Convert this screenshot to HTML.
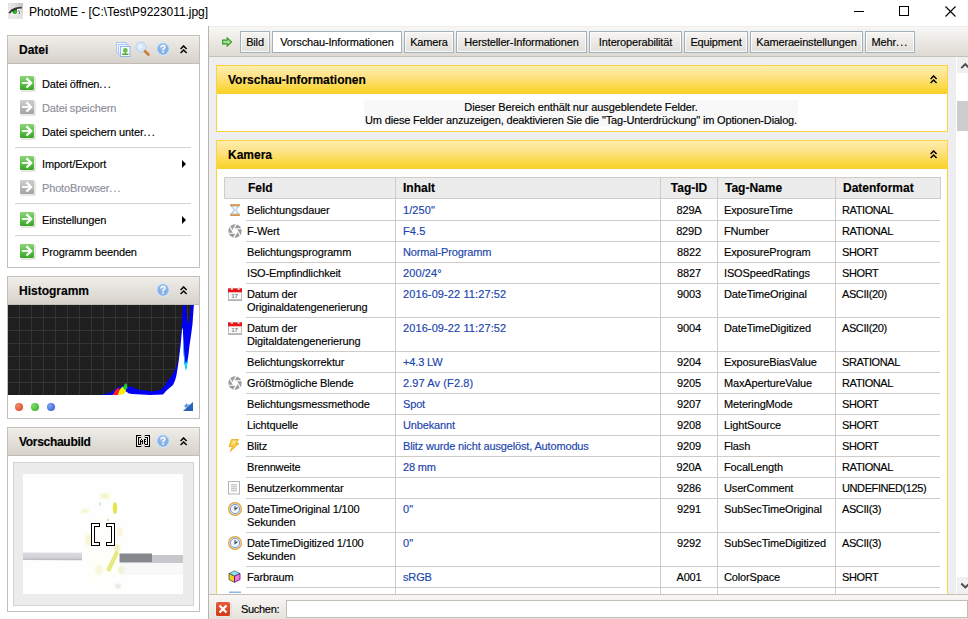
<!DOCTYPE html><html><head><meta charset="utf-8"><style>
*{margin:0;padding:0;box-sizing:border-box}
html,body{width:968px;height:619px;overflow:hidden;background:#fff;font-family:"Liberation Sans",sans-serif;font-size:11px;color:#000}
.a{position:absolute}
.t{position:absolute;white-space:nowrap;line-height:13px;height:13px;margin-top:-10px;letter-spacing:-0.15px;-webkit-text-stroke:0.15px currentColor}
.b{font-weight:bold;font-size:12px;letter-spacing:0}
.blue{color:#1a44ad}
.gray{color:#8d8d99}
.ph{position:absolute;background:linear-gradient(#f6f4f0 0,#efede9 1px,#d6d2cb);border-bottom:1px solid #c2bdb5}
.panel{position:absolute;border:1px solid #c4bfb7;background:#fff}
.sep{position:absolute;height:1px;background:#d8d4cc}
.btn{position:absolute;top:31px;height:22px;border:1px solid #9fb0bf;background:linear-gradient(#f6f5f2,#e2dfd9);box-shadow:inset 0 0 0 1px rgba(255,255,255,0.75)}
.hl{position:absolute;height:1px;background:#d0ccc5}
.vl{position:absolute;width:1px;background:#d0ccc5}
</style></head><body>
<svg width="0" height="0" style="position:absolute"><defs>
<linearGradient id="gg" x1="0" y1="0" x2="0" y2="1"><stop offset="0" stop-color="#8ad67a"/><stop offset="1" stop-color="#35a623"/></linearGradient>
<linearGradient id="gr" x1="0" y1="0" x2="0" y2="1"><stop offset="0" stop-color="#cfcfcf"/><stop offset="1" stop-color="#a3a3a3"/></linearGradient>
</defs></svg>

<svg class="a" style="left:8px;top:3px" width="15" height="16" viewBox="0 0 15 16"><defs><linearGradient id="eyebg" x1="0" y1="1" x2="1" y2="0"><stop offset="0" stop-color="#ececec"/><stop offset="0.6" stop-color="#e2e2e2"/><stop offset="1" stop-color="#bdbdbd"/></linearGradient></defs><rect width="15" height="16" fill="url(#eyebg)"/><path d="M1.2 10.5 Q5 5.5 13.5 5.2 Q12 10.5 6 12.2 Q3 12.6 1.2 10.5Z" fill="#f4f4f4"/><path d="M1.2 10.2 Q3.5 6.5 7 5.6 Q10 4.6 13.8 4.6" fill="none" stroke="#3e3e3e" stroke-width="1.9"/><path d="M10.5 7 Q12 8.5 11.2 11" fill="none" stroke="#6a6a6a" stroke-width="1"/><circle cx="6.8" cy="8.6" r="2.4" fill="#1c7a1c"/><circle cx="7.2" cy="9" r="1.4" fill="#22cc22"/><path d="M3 8 Q5 6.3 9 6.2" stroke="#333" stroke-width="1.2" fill="none"/></svg>
<div class="t" style="left:29px;top:17px;font-size:12px;letter-spacing:-0.05px;line-height:15px;height:15px;margin-top:-12px;-webkit-text-stroke:0.05px currentColor">PhotoME - [C:\Test\P9223011.jpg]</div>
<div class="a" style="left:854px;top:11px;width:10px;height:1px;background:#000"></div>
<div class="a" style="left:899px;top:6px;width:10px;height:10px;border:1px solid #000"></div>
<svg class="a" style="left:945px;top:6px" width="11" height="11" viewBox="0 0 11 11"><path d="M0.5 0.5 L10.5 10.5 M10.5 0.5 L0.5 10.5" stroke="#000" stroke-width="1.1"/></svg>
<div class="panel" style="left:7px;top:35px;width:193px;height:233px"></div>
<div class="ph" style="left:8px;top:36px;width:191px;height:28px"></div>
<div class="t b" style="left:19px;top:54px;">Datei</div>
<svg class="a" style="left:116px;top:42px" width="15" height="15" viewBox="0 0 15 15"><rect x="0.5" y="0.5" width="9.5" height="10" fill="#f2f7fd" stroke="#a9c8ee"/><rect x="2.5" y="2.5" width="9.5" height="10" fill="#f2f7fd" stroke="#a9c8ee"/><rect x="4.5" y="4.5" width="9.5" height="10" fill="#fafcff" stroke="#8db5e6"/><rect x="6" y="11.5" width="6.5" height="1.5" fill="#3fae30"/><circle cx="9.3" cy="8.4" r="2.4" fill="#63c04a"/><rect x="8.8" y="10" width="1" height="2" fill="#b07a3a"/></svg>
<svg class="a" style="left:135px;top:41px" width="16" height="16" viewBox="0 0 16 16"><circle cx="6" cy="6.2" r="5" fill="#d6e6f9" stroke="#b3d0f2" stroke-width="1"/><circle cx="5.3" cy="5.2" r="2.2" fill="#e8f2fc"/><path d="M10 10.2 L13.4 13.6" stroke="#c8823e" stroke-width="2.8" stroke-linecap="round"/></svg>
<svg style="position:absolute;left:156px;top:42px" width="14" height="14" viewBox="0 0 14 14"><circle cx="7" cy="7" r="6.9" fill="#d6e5f7"/><circle cx="7" cy="7" r="6" fill="#a9c8ef"/><circle cx="7" cy="7" r="5.2" fill="#86b0e6"/><circle cx="7" cy="5.5" r="3.5" fill="#9cc0ec" opacity="0.6"/><path d="M5.1 5.4 Q5.1 3.5 7 3.5 Q8.9 3.5 8.9 5.1 Q8.9 6.1 7.8 6.6 Q7 7 7 8.2" fill="none" stroke="#fff" stroke-width="1.5"/><rect x="6.2" y="9.1" width="1.6" height="1.6" fill="#fff"/></svg>
<svg style="position:absolute;left:180px;top:45px" width="8" height="9" viewBox="0 0 8 9"><path d="M0.6 3.9 L3.6 0.9 L6.6 3.9 M0.6 8 L3.6 5 L6.6 8" fill="none" stroke="#000" stroke-width="1.45"/></svg>
<svg style="position:absolute;left:19px;top:75px" width="17" height="17" viewBox="0 0 17 17"><rect x="1.5" y="1.5" width="15" height="15" rx="1.5" fill="#d5d2c6"/><rect x="0.5" y="0.5" width="15" height="15" rx="1.5" fill="#fdfdfb"/><rect x="1" y="1" width="14" height="14" rx="1.2" fill="url(#gg)"/><path d="M2.9 8 H11.8" stroke="#fff" stroke-width="1.8"/><path d="M7.4 3.4 L12.2 8 L7.4 12.6" fill="none" stroke="#fff" stroke-width="2.2"/></svg>
<div class="t " style="left:42px;top:88px;">Datei öffnen<span style="letter-spacing:1.1px">...</span></div>
<svg style="position:absolute;left:19px;top:99px" width="17" height="17" viewBox="0 0 17 17"><rect x="1.5" y="1.5" width="15" height="15" rx="1.5" fill="#d5d2c6"/><rect x="0.5" y="0.5" width="15" height="15" rx="1.5" fill="#fdfdfb"/><rect x="1" y="1" width="14" height="14" rx="1.2" fill="url(#gr)"/><path d="M2.9 8 H11.8" stroke="#fff" stroke-width="1.8"/><path d="M7.4 3.4 L12.2 8 L7.4 12.6" fill="none" stroke="#fff" stroke-width="2.2"/></svg>
<div class="t gray" style="left:42px;top:112px;">Datei speichern</div>
<svg style="position:absolute;left:19px;top:123px" width="17" height="17" viewBox="0 0 17 17"><rect x="1.5" y="1.5" width="15" height="15" rx="1.5" fill="#d5d2c6"/><rect x="0.5" y="0.5" width="15" height="15" rx="1.5" fill="#fdfdfb"/><rect x="1" y="1" width="14" height="14" rx="1.2" fill="url(#gg)"/><path d="M2.9 8 H11.8" stroke="#fff" stroke-width="1.8"/><path d="M7.4 3.4 L12.2 8 L7.4 12.6" fill="none" stroke="#fff" stroke-width="2.2"/></svg>
<div class="t " style="left:42px;top:136px;">Datei speichern unter<span style="letter-spacing:1.1px">...</span></div>
<svg style="position:absolute;left:19px;top:155px" width="17" height="17" viewBox="0 0 17 17"><rect x="1.5" y="1.5" width="15" height="15" rx="1.5" fill="#d5d2c6"/><rect x="0.5" y="0.5" width="15" height="15" rx="1.5" fill="#fdfdfb"/><rect x="1" y="1" width="14" height="14" rx="1.2" fill="url(#gg)"/><path d="M2.9 8 H11.8" stroke="#fff" stroke-width="1.8"/><path d="M7.4 3.4 L12.2 8 L7.4 12.6" fill="none" stroke="#fff" stroke-width="2.2"/></svg>
<div class="t " style="left:42px;top:168px;">Import/Export</div>
<svg class="a" style="left:182px;top:160px" width="5" height="8" viewBox="0 0 5 8"><path d="M0 0 L4 4 L0 8Z" fill="#000"/></svg>
<svg style="position:absolute;left:19px;top:179px" width="17" height="17" viewBox="0 0 17 17"><rect x="1.5" y="1.5" width="15" height="15" rx="1.5" fill="#d5d2c6"/><rect x="0.5" y="0.5" width="15" height="15" rx="1.5" fill="#fdfdfb"/><rect x="1" y="1" width="14" height="14" rx="1.2" fill="url(#gr)"/><path d="M2.9 8 H11.8" stroke="#fff" stroke-width="1.8"/><path d="M7.4 3.4 L12.2 8 L7.4 12.6" fill="none" stroke="#fff" stroke-width="2.2"/></svg>
<div class="t gray" style="left:42px;top:192px;">PhotoBrowser<span style="letter-spacing:1.1px">...</span></div>
<svg style="position:absolute;left:19px;top:211px" width="17" height="17" viewBox="0 0 17 17"><rect x="1.5" y="1.5" width="15" height="15" rx="1.5" fill="#d5d2c6"/><rect x="0.5" y="0.5" width="15" height="15" rx="1.5" fill="#fdfdfb"/><rect x="1" y="1" width="14" height="14" rx="1.2" fill="url(#gg)"/><path d="M2.9 8 H11.8" stroke="#fff" stroke-width="1.8"/><path d="M7.4 3.4 L12.2 8 L7.4 12.6" fill="none" stroke="#fff" stroke-width="2.2"/></svg>
<div class="t " style="left:42px;top:224px;">Einstellungen</div>
<svg class="a" style="left:182px;top:216px" width="5" height="8" viewBox="0 0 5 8"><path d="M0 0 L4 4 L0 8Z" fill="#000"/></svg>
<svg style="position:absolute;left:19px;top:243px" width="17" height="17" viewBox="0 0 17 17"><rect x="1.5" y="1.5" width="15" height="15" rx="1.5" fill="#d5d2c6"/><rect x="0.5" y="0.5" width="15" height="15" rx="1.5" fill="#fdfdfb"/><rect x="1" y="1" width="14" height="14" rx="1.2" fill="url(#gg)"/><path d="M2.9 8 H11.8" stroke="#fff" stroke-width="1.8"/><path d="M7.4 3.4 L12.2 8 L7.4 12.6" fill="none" stroke="#fff" stroke-width="2.2"/></svg>
<div class="t " style="left:42px;top:256px;">Programm beenden</div>
<div class="sep" style="left:15px;top:147px;width:176px"></div>
<div class="sep" style="left:15px;top:203px;width:176px"></div>
<div class="sep" style="left:15px;top:235px;width:176px"></div>
<div class="panel" style="left:7px;top:276px;width:193px;height:143px"></div>
<div class="ph" style="left:8px;top:277px;width:191px;height:28px"></div>
<div class="t b" style="left:19px;top:295px;">Histogramm</div>
<svg style="position:absolute;left:156px;top:283px" width="14" height="14" viewBox="0 0 14 14"><circle cx="7" cy="7" r="6.9" fill="#d6e5f7"/><circle cx="7" cy="7" r="6" fill="#a9c8ef"/><circle cx="7" cy="7" r="5.2" fill="#86b0e6"/><circle cx="7" cy="5.5" r="3.5" fill="#9cc0ec" opacity="0.6"/><path d="M5.1 5.4 Q5.1 3.5 7 3.5 Q8.9 3.5 8.9 5.1 Q8.9 6.1 7.8 6.6 Q7 7 7 8.2" fill="none" stroke="#fff" stroke-width="1.5"/><rect x="6.2" y="9.1" width="1.6" height="1.6" fill="#fff"/></svg>
<svg style="position:absolute;left:180px;top:286px" width="8" height="9" viewBox="0 0 8 9"><path d="M0.6 3.9 L3.6 0.9 L6.6 3.9 M0.6 8 L3.6 5 L6.6 8" fill="none" stroke="#000" stroke-width="1.45"/></svg>
<svg class="a" style="left:8px;top:305px" width="191" height="90" viewBox="0 0 191 90"><rect width="191" height="90" fill="#1f1f1f"/><line x1="11.5" y1="0" x2="11.5" y2="90" stroke="#343434" stroke-width="1"/><line x1="23.5" y1="0" x2="23.5" y2="90" stroke="#343434" stroke-width="1"/><line x1="35.5" y1="0" x2="35.5" y2="90" stroke="#343434" stroke-width="1"/><line x1="47.5" y1="0" x2="47.5" y2="90" stroke="#343434" stroke-width="1"/><line x1="59.5" y1="0" x2="59.5" y2="90" stroke="#343434" stroke-width="1"/><line x1="71.5" y1="0" x2="71.5" y2="90" stroke="#343434" stroke-width="1"/><line x1="83.5" y1="0" x2="83.5" y2="90" stroke="#343434" stroke-width="1"/><line x1="95.5" y1="0" x2="95.5" y2="90" stroke="#343434" stroke-width="1"/><line x1="107.5" y1="0" x2="107.5" y2="90" stroke="#343434" stroke-width="1"/><line x1="119.5" y1="0" x2="119.5" y2="90" stroke="#343434" stroke-width="1"/><line x1="131.5" y1="0" x2="131.5" y2="90" stroke="#343434" stroke-width="1"/><line x1="143.5" y1="0" x2="143.5" y2="90" stroke="#343434" stroke-width="1"/><line x1="155.5" y1="0" x2="155.5" y2="90" stroke="#343434" stroke-width="1"/><line x1="167.5" y1="0" x2="167.5" y2="90" stroke="#343434" stroke-width="1"/><line x1="179.5" y1="0" x2="179.5" y2="90" stroke="#343434" stroke-width="1"/><line x1="0" y1="12.5" x2="187" y2="12.5" stroke="#343434" stroke-width="1"/><line x1="0" y1="25.5" x2="187" y2="25.5" stroke="#343434" stroke-width="1"/><line x1="0" y1="38.5" x2="187" y2="38.5" stroke="#343434" stroke-width="1"/><line x1="0" y1="51.5" x2="187" y2="51.5" stroke="#343434" stroke-width="1"/><line x1="0" y1="64.5" x2="187" y2="64.5" stroke="#343434" stroke-width="1"/><line x1="0" y1="77.5" x2="187" y2="77.5" stroke="#343434" stroke-width="1"/><path d="M92.0 90.0 L102.0 88.0 L106.0 85.0 L111.0 82.0 L115.0 81.0 L118.0 78.5 L120.0 82.0 L124.0 81.5 L128.0 84.0 L132.0 85.0 L138.0 85.5 L144.0 86.5 L150.0 85.5 L154.0 84.0 L157.0 80.0 L160.5 75.0 L163.5 71.0 L166.0 67.0 L168.3 62.0 L170.0 55.0 L170.7 50.0 L171.5 41.0 L172.3 32.0 L173.3 26.0 L174.0 20.0 L174.8 2.0 L175.5 0.0 L178.0 0.0 L178.5 9.0 L179.5 17.0 L180.5 19.0 L181.5 13.0 L182.3 7.0 L182.8 0.0 L186.5 0.0 L186.5 90.0 Z" fill="#0000f4"/><path d="M104.0 90.0 L108.0 89.0 L111.0 87.5 L115.0 87.0 L118.0 86.5 L121.0 88.5 L124.0 89.0 L142.0 90.0 L155.0 89.5 L158.0 86.0 L162.0 82.5 L165.0 80.0 L167.0 75.5 L168.3 71.0 L169.5 64.0 L170.7 56.0 L172.3 43.0 L173.2 34.0 L174.0 25.0 L174.8 22.5 L175.3 35.0 L175.6 47.0 L176.4 58.0 L177.2 62.0 L178.0 64.5 L178.8 61.0 L179.6 56.0 L180.4 50.0 L181.2 43.0 L182.0 37.0 L182.8 32.0 L183.6 26.0 L184.5 19.0 L185.2 9.0 L185.8 1.0 L186.0 0.0 L191.0 0.0 L191.0 90.0 Z" fill="#fff"/><path d="M175.2 33.0 L175.6 47.0 L176.4 58.0 L177.2 62.0 L178.0 66.0 L178.8 62.0 L179.6 56.0 L180.2 52.0 L178.8 57.0 L177.5 58.0 L176.5 51.0 L175.8 39.0 Z" fill="#00e8f8"/><path d="M172.5 335 L173 328 L173.6 336 L172.8 350Z" fill="#22dd22"/><path d="M185 305.5 L187 305.5 L186 309Z" fill="#ff22ff"/><path d="M105.0 90.0 L107.0 85.5 L109.0 84.0 L111.0 82.5 L112.0 86.0 L110.0 90.0 Z" fill="#ff1a1a"/><path d="M110.0 90.0 L111.0 86.0 L113.0 83.0 L115.0 81.5 L117.0 83.0 L118.0 86.0 L116.0 89.0 Z" fill="#f4f000"/><path d="M115.0 83.0 L116.5 79.5 L118.0 78.0 L119.0 80.0 L119.5 83.0 L117.5 85.0 Z" fill="#22cc22"/></svg>
<div class="a" style="left:15px;top:403px;width:8px;height:8px;border-radius:50%;background:radial-gradient(circle at 35% 35%,#f28a6a,#d0401c)"></div>
<div class="a" style="left:31px;top:403px;width:8px;height:8px;border-radius:50%;background:radial-gradient(circle at 35% 35%,#7edc6a,#2ea81e)"></div>
<div class="a" style="left:47px;top:403px;width:8px;height:8px;border-radius:50%;background:radial-gradient(circle at 35% 35%,#7fa2f0,#2c55d0)"></div>
<svg class="a" style="left:183px;top:402px" width="10" height="9" viewBox="0 0 10 9"><path d="M0 9 L10 0 L10 9Z" fill="#2a62b8"/><path d="M1 4 L4 1 L4 2.5 L7 2.5 L3 6 Z" fill="#5a9ae0"/></svg>
<div class="panel" style="left:7px;top:427px;width:193px;height:185px"></div>
<div class="ph" style="left:8px;top:428px;width:191px;height:28px"></div>
<div class="t b" style="left:19px;top:446px;letter-spacing:-0.3px">Vorschaubild</div>
<svg class="a" style="left:135px;top:434px" width="16" height="14" viewBox="0 0 16 14"><path d="M6.2 2.5 H2.5 V11.5 H6.2 M9.8 2.5 H13.5 V11.5 H9.8" fill="none" stroke="#000" stroke-width="3"/><path d="M6.2 2.5 H2.5 V11.5 H6.2 M9.8 2.5 H13.5 V11.5 H9.8" fill="none" stroke="#fff" stroke-width="1"/><g shape-rendering="crispEdges" fill="#000"><rect x="6" y="5" width="1" height="1"/><rect x="5" y="6" width="1" height="4"/><rect x="7" y="6" width="1" height="4"/><rect x="5" y="7" width="3" height="1"/><rect x="9" y="5" width="1" height="5"/><rect x="9" y="5" width="2" height="1"/><rect x="9" y="7" width="2" height="1"/></g></svg>
<svg style="position:absolute;left:156px;top:434px" width="14" height="14" viewBox="0 0 14 14"><circle cx="7" cy="7" r="6.9" fill="#d6e5f7"/><circle cx="7" cy="7" r="6" fill="#a9c8ef"/><circle cx="7" cy="7" r="5.2" fill="#86b0e6"/><circle cx="7" cy="5.5" r="3.5" fill="#9cc0ec" opacity="0.6"/><path d="M5.1 5.4 Q5.1 3.5 7 3.5 Q8.9 3.5 8.9 5.1 Q8.9 6.1 7.8 6.6 Q7 7 7 8.2" fill="none" stroke="#fff" stroke-width="1.5"/><rect x="6.2" y="9.1" width="1.6" height="1.6" fill="#fff"/></svg>
<svg style="position:absolute;left:180px;top:437px" width="8" height="9" viewBox="0 0 8 9"><path d="M0.6 3.9 L3.6 0.9 L6.6 3.9 M0.6 8 L3.6 5 L6.6 8" fill="none" stroke="#000" stroke-width="1.45"/></svg>
<div class="a" style="left:13px;top:462px;width:181px;height:144px;background:#ececec;border:1px solid #d6d3cc"></div>
<svg class="a" style="left:23px;top:474px" width="160" height="120" viewBox="0 0 160 120"><defs><linearGradient id="bandL" x1="0" y1="0" x2="0" y2="1"><stop offset="0" stop-color="#dcdce0"/><stop offset="0.7" stop-color="#d2d2d6"/><stop offset="1" stop-color="#b4b4b8"/></linearGradient><filter id="blr"><feGaussianBlur stdDeviation="1.3"/></filter><filter id="blr2"><feGaussianBlur stdDeviation="0.6"/></filter></defs><rect width="160" height="120" fill="#fefefe"/><path d="M0 78.4 L59 78.8 L59 86.2 L0 86Z" fill="url(#bandL)"/><rect x="96.5" y="79.5" width="32.5" height="9" fill="#86888e"/><rect x="129" y="81" width="31" height="8" fill="#c6c8cc"/><rect x="97" y="89" width="63" height="12" fill="#f8f8f8"/><g filter="url(#blr)"><ellipse cx="78" cy="80" rx="17" ry="38" fill="#fefefb"/><ellipse cx="82" cy="22" rx="5" ry="2.5" fill="#f4f4c0"/><ellipse cx="62" cy="37" rx="4" ry="2" fill="#f4f4c8"/><ellipse cx="94" cy="74" rx="3" ry="4" fill="#f2f2c0"/><ellipse cx="70" cy="66" rx="3" ry="5" fill="#f6f5d8"/><ellipse cx="95" cy="112" rx="3" ry="2" fill="#e4e6d8"/><ellipse cx="66" cy="66" rx="4" ry="6" fill="#f6f6d6"/><ellipse cx="97" cy="58" rx="3" ry="5" fill="#f8f6dc"/><ellipse cx="76" cy="96" rx="4" ry="5" fill="#f6f7dc"/><ellipse cx="98" cy="96" rx="3" ry="4" fill="#f0f2d0"/></g><g filter="url(#blr2)"><ellipse cx="92" cy="34" rx="2.2" ry="6" fill="#e6e448"/><path d="M93 76 L96 79 L87 98 L83 96Z" fill="#e2e66a" opacity="0.85"/><ellipse cx="85" cy="46" rx="1.2" ry="1.2" fill="#f2d4c8"/><ellipse cx="77" cy="30" rx="1.5" ry="2" fill="#e4e4ee"/></g></svg>
<svg class="a" style="left:0px;top:0px" width="130" height="560" viewBox="0 0 130 560" shape-rendering="crispEdges"><path d="M91 523 H100 V527 H95 V542 H100 V546 H91Z M106 523 H115 V546 H106 V542 H111 V527 H106Z" fill="#000"/><path d="M92 524 H99 V526 H94 V543 H99 V545 H92Z M107 524 H114 V545 H107 V543 H112 V526 H107Z" fill="#fff"/></svg>
<div class="a" style="left:208px;top:26px;width:760px;height:593px;background:#eeeef0;border-left:1px solid #b9b5ad"></div>
<div class="a" style="left:209px;top:27px;width:759px;height:30px;background:linear-gradient(#f8f7f5,#dedad3);border-bottom:1px solid #c6c1b9"></div>
<svg class="a" style="left:222px;top:37px" width="11" height="10" viewBox="0 0 11 10"><path d="M0.6 3.1 H5.2 V0.9 L9.6 5 L5.2 9.1 V6.9 H0.6 Z" fill="#a8dc98" stroke="#2e9a20" stroke-width="1.1" stroke-linejoin="miter"/></svg>
<div class="btn" style="left:240px;width:30px;"></div>
<div class="t" style="left:240px;width:30px;top:46px;text-align:center">Bild</div>
<div class="btn" style="left:272px;width:130px;background:#fff;"></div>
<div class="t" style="left:272px;width:130px;top:46px;text-align:center">Vorschau-Informationen</div>
<div class="btn" style="left:404px;width:50px;"></div>
<div class="t" style="left:404px;width:50px;top:46px;text-align:center">Kamera</div>
<div class="btn" style="left:456px;width:131px;"></div>
<div class="t" style="left:456px;width:131px;top:46px;text-align:center">Hersteller-Informationen</div>
<div class="btn" style="left:589px;width:93px;"></div>
<div class="t" style="left:589px;width:93px;top:46px;text-align:center">Interoperabilität</div>
<div class="btn" style="left:684px;width:64px;"></div>
<div class="t" style="left:684px;width:64px;top:46px;text-align:center">Equipment</div>
<div class="btn" style="left:750px;width:113px;"></div>
<div class="t" style="left:750px;width:113px;top:46px;text-align:center">Kameraeinstellungen</div>
<div class="btn" style="left:865px;width:50px;"></div>
<div class="t" style="left:865px;width:50px;top:46px;text-align:center">Mehr<span style="letter-spacing:1.1px">...</span></div>
<div class="a" style="left:956px;top:57px;width:12px;height:537px;background:#fff"></div>
<div class="a" style="left:957px;top:57px;width:11px;height:16px;background:#f0f0f0"></div>
<div class="a" style="left:957px;top:577px;width:11px;height:17px;background:#f0f0f0"></div>
<div class="a" style="left:957px;top:101px;width:11px;height:30px;background:#cdcdcd"></div>
<svg class="a" style="left:956px;top:57px" width="12" height="537" viewBox="0 0 12 537"><path d="M5.3 11.2 L9.3 7.2 L13.3 11.2" fill="none" stroke="#4a4a4a" stroke-width="1.9"/><path d="M5.3 526.5 L9.3 530.5 L13.3 526.5" fill="none" stroke="#4a4a4a" stroke-width="1.9"/></svg>
<div class="a" style="left:216px;top:65px;width:732px;height:67px;border:1px solid #fad33e;background:#fff"></div>
<div class="a" style="left:217px;top:66px;width:730px;height:28px;background:linear-gradient(#fdeeae,#fde38a 35%,#fbd637 85%,#f8d02a)"></div>
<div class="t b" style="left:228px;top:84px;">Vorschau-Informationen</div>
<svg style="position:absolute;left:930px;top:75px" width="8" height="9" viewBox="0 0 8 9"><path d="M0.6 3.9 L3.6 0.9 L6.6 3.9 M0.6 8 L3.6 5 L6.6 8" fill="none" stroke="#000" stroke-width="1.45"/></svg>
<div class="a" style="left:364px;top:100px;width:434px;height:26px;background:#f8f8f8"></div>
<div class="t" style="left:364px;width:434px;top:111px;text-align:center;letter-spacing:-0.12px">Dieser Bereich enthält nur ausgeblendete Felder.</div>
<div class="t" style="left:364px;width:434px;top:124px;text-align:center;letter-spacing:-0.17px">Um diese Felder anzuzeigen, deaktivieren Sie die "Tag-Unterdrückung" im Optionen-Dialog.</div>
<div class="a" style="left:209px;top:57px;width:747px;height:537px;overflow:hidden">
<div class="a" style="left:7px;top:83px;width:732px;height:600px;border:1px solid #fad33e;background:#fff"></div>
<div class="a" style="left:8px;top:84px;width:730px;height:28px;background:linear-gradient(#fdeeae,#fde38a 35%,#fbd637 85%,#f8d02a)"></div>
<div class="t b" style="left:19px;top:102px">Kamera</div>
<svg style="position:absolute;left:721px;top:93px" width="8" height="9" viewBox="0 0 8 9"><path d="M0.6 3.9 L3.6 0.9 L6.6 3.9 M0.6 8 L3.6 5 L6.6 8" fill="none" stroke="#000" stroke-width="1.45"/></svg>
<div class="a" style="left:15px;top:120px;width:717px;height:22px;background:#ececec;border:1px solid #d0cdc6"></div>
<div class="vl" style="left:186px;top:121px;height:600px"></div>
<div class="vl" style="left:451px;top:121px;height:600px"></div>
<div class="vl" style="left:508px;top:121px;height:600px"></div>
<div class="vl" style="left:626px;top:121px;height:600px"></div>
<div class="t b" style="left:39px;top:135px">Feld</div>
<div class="t b" style="left:194px;top:135px">Inhalt</div>
<div class="t b" style="left:452px;width:56px;text-align:center;top:135px">Tag-ID</div>
<div class="t b" style="left:516px;top:135px">Tag-Name</div>
<div class="t b" style="left:634px;top:135px">Datenformat</div>
<div class="t" style="left:38px;top:157px">Belichtungsdauer</div>
<div class="t blue" style="left:194px;top:157px;letter-spacing:0.1px;">1/250"</div>
<div class="t" style="left:452px;width:56px;text-align:center;top:157px">829A</div>
<div class="t" style="left:515px;top:157px">ExposureTime</div>
<div class="t" style="left:633px;top:157px;letter-spacing:-0.4px">RATIONAL</div>
<svg class="a" style="left:19px;top:146px" width="14" height="14" viewBox="0 0 14 14"><path d="M3.2 2.8 L10.8 2.8 L7.8 7 L10.8 11.2 L3.2 11.2 L6.2 7Z" fill="#f2f7fd" stroke="#a9c9ef" stroke-width="1.1"/><rect x="2" y="1" width="10" height="2.3" rx="1" fill="#cf9250"/><rect x="2" y="10.8" width="10" height="2.3" rx="1" fill="#cf9250"/><rect x="3" y="1.4" width="8" height="0.8" fill="#e8b878"/><rect x="3" y="11.2" width="8" height="0.8" fill="#e8b878"/></svg>
<div class="hl" style="left:37px;top:163px;width:694px"></div>
<div class="t" style="left:38px;top:178px">F-Wert</div>
<div class="t blue" style="left:194px;top:178px;letter-spacing:0.1px;">F4.5</div>
<div class="t" style="left:452px;width:56px;text-align:center;top:178px">829D</div>
<div class="t" style="left:515px;top:178px">FNumber</div>
<div class="t" style="left:633px;top:178px;letter-spacing:-0.4px">RATIONAL</div>
<svg class="a" style="left:19px;top:167px" width="14" height="14" viewBox="0 0 14 14"><circle cx="7" cy="7" r="6.7" fill="#9c9c9c"/><path d="M9.60 7.00 L8.30 9.25 L5.70 9.25 L4.40 7.00 L5.70 4.75 L8.30 4.75Z" fill="#fff"/><path d="M9.60 7.00 L5.53 14.05 M8.30 9.25 L0.16 9.25 M5.70 9.25 L1.63 2.20 M4.40 7.00 L8.47 -0.05 M5.70 4.75 L13.84 4.75 M8.30 4.75 L12.37 11.80 " stroke="#fff" stroke-width="1.2"/></svg>
<div class="hl" style="left:37px;top:184px;width:694px"></div>
<div class="t" style="left:38px;top:199px">Belichtungsprogramm</div>
<div class="t blue" style="left:194px;top:199px;">Normal-Programm</div>
<div class="t" style="left:452px;width:56px;text-align:center;top:199px">8822</div>
<div class="t" style="left:515px;top:199px">ExposureProgram</div>
<div class="t" style="left:633px;top:199px;letter-spacing:-0.4px">SHORT</div>

<div class="hl" style="left:37px;top:205px;width:694px"></div>
<div class="t" style="left:38px;top:220px">ISO-Empfindlichkeit</div>
<div class="t blue" style="left:194px;top:220px;letter-spacing:0.1px;">200/24°</div>
<div class="t" style="left:452px;width:56px;text-align:center;top:220px">8827</div>
<div class="t" style="left:515px;top:220px">ISOSpeedRatings</div>
<div class="t" style="left:633px;top:220px;letter-spacing:-0.4px">SHORT</div>

<div class="hl" style="left:37px;top:226px;width:694px"></div>
<div class="t" style="left:38px;top:241px">Datum der</div>
<div class="t" style="left:38px;top:254px">Originaldatengenerierung</div>
<div class="t blue" style="left:194px;top:241px;letter-spacing:0.1px;">2016-09-22 11:27:52</div>
<div class="t" style="left:452px;width:56px;text-align:center;top:241px">9003</div>
<div class="t" style="left:515px;top:241px">DateTimeOriginal</div>
<div class="t" style="left:633px;top:241px;letter-spacing:-0.4px">ASCII(20)</div>
<svg class="a" style="left:19px;top:230px" width="14" height="14" viewBox="0 0 14 14"><rect x="0.5" y="4" width="13" height="9.5" fill="#fafafa" stroke="#bdbdbd" stroke-width="1"/><rect x="0.5" y="12.3" width="13" height="1.2" fill="#a8a8a8"/><rect x="0" y="1.3" width="14" height="4" fill="#e4161a"/><rect x="2.8" y="0.3" width="2.2" height="2.6" rx="1" fill="#d8d8d8"/><rect x="9.5" y="0.3" width="2.2" height="2.6" rx="1" fill="#d8d8d8"/><text x="6.6" y="11.2" font-size="6.2" font-family="Liberation Sans" font-weight="bold" fill="#8a8a8a" text-anchor="middle">17</text></svg>
<div class="hl" style="left:37px;top:260px;width:694px"></div>
<div class="t" style="left:38px;top:275px">Datum der</div>
<div class="t" style="left:38px;top:288px">Digitaldatengenerierung</div>
<div class="t blue" style="left:194px;top:275px;letter-spacing:0.1px;">2016-09-22 11:27:52</div>
<div class="t" style="left:452px;width:56px;text-align:center;top:275px">9004</div>
<div class="t" style="left:515px;top:275px">DateTimeDigitized</div>
<div class="t" style="left:633px;top:275px;letter-spacing:-0.4px">ASCII(20)</div>
<svg class="a" style="left:19px;top:264px" width="14" height="14" viewBox="0 0 14 14"><rect x="0.5" y="4" width="13" height="9.5" fill="#fafafa" stroke="#bdbdbd" stroke-width="1"/><rect x="0.5" y="12.3" width="13" height="1.2" fill="#a8a8a8"/><rect x="0" y="1.3" width="14" height="4" fill="#e4161a"/><rect x="2.8" y="0.3" width="2.2" height="2.6" rx="1" fill="#d8d8d8"/><rect x="9.5" y="0.3" width="2.2" height="2.6" rx="1" fill="#d8d8d8"/><text x="6.6" y="11.2" font-size="6.2" font-family="Liberation Sans" font-weight="bold" fill="#8a8a8a" text-anchor="middle">17</text></svg>
<div class="hl" style="left:37px;top:294px;width:694px"></div>
<div class="t" style="left:38px;top:309px">Belichtungskorrektur</div>
<div class="t blue" style="left:194px;top:309px;">+4.3 LW</div>
<div class="t" style="left:452px;width:56px;text-align:center;top:309px">9204</div>
<div class="t" style="left:515px;top:309px">ExposureBiasValue</div>
<div class="t" style="left:633px;top:309px;letter-spacing:-0.4px">SRATIONAL</div>

<div class="hl" style="left:37px;top:315px;width:694px"></div>
<div class="t" style="left:38px;top:330px">Größtmögliche Blende</div>
<div class="t blue" style="left:194px;top:330px;letter-spacing:0.1px;">2.97 Av (F2.8)</div>
<div class="t" style="left:452px;width:56px;text-align:center;top:330px">9205</div>
<div class="t" style="left:515px;top:330px">MaxApertureValue</div>
<div class="t" style="left:633px;top:330px;letter-spacing:-0.4px">RATIONAL</div>
<svg class="a" style="left:19px;top:319px" width="14" height="14" viewBox="0 0 14 14"><circle cx="7" cy="7" r="6.7" fill="#9c9c9c"/><path d="M9.60 7.00 L8.30 9.25 L5.70 9.25 L4.40 7.00 L5.70 4.75 L8.30 4.75Z" fill="#fff"/><path d="M9.60 7.00 L5.53 14.05 M8.30 9.25 L0.16 9.25 M5.70 9.25 L1.63 2.20 M4.40 7.00 L8.47 -0.05 M5.70 4.75 L13.84 4.75 M8.30 4.75 L12.37 11.80 " stroke="#fff" stroke-width="1.2"/></svg>
<div class="hl" style="left:37px;top:336px;width:694px"></div>
<div class="t" style="left:38px;top:351px">Belichtungsmessmethode</div>
<div class="t blue" style="left:194px;top:351px;">Spot</div>
<div class="t" style="left:452px;width:56px;text-align:center;top:351px">9207</div>
<div class="t" style="left:515px;top:351px">MeteringMode</div>
<div class="t" style="left:633px;top:351px;letter-spacing:-0.4px">SHORT</div>

<div class="hl" style="left:37px;top:357px;width:694px"></div>
<div class="t" style="left:38px;top:372px">Lichtquelle</div>
<div class="t blue" style="left:194px;top:372px;">Unbekannt</div>
<div class="t" style="left:452px;width:56px;text-align:center;top:372px">9208</div>
<div class="t" style="left:515px;top:372px">LightSource</div>
<div class="t" style="left:633px;top:372px;letter-spacing:-0.4px">SHORT</div>

<div class="hl" style="left:37px;top:378px;width:694px"></div>
<div class="t" style="left:38px;top:393px">Blitz</div>
<div class="t blue" style="left:194px;top:393px;">Blitz wurde nicht ausgelöst, Automodus</div>
<div class="t" style="left:452px;width:56px;text-align:center;top:393px">9209</div>
<div class="t" style="left:515px;top:393px">Flash</div>
<div class="t" style="left:633px;top:393px;letter-spacing:-0.4px">SHORT</div>
<svg class="a" style="left:19px;top:382px" width="13" height="13" viewBox="0 0 13 13"><path d="M3.5 0.6 L10.5 0.6 L8 4.5 L11 4.5 L2.2 12.4 L4.5 7.5 L1 7.5Z" fill="#f6cf48" stroke="#e9a825" stroke-width="0.9"/><path d="M4.5 1.8 L8.6 1.8 L6.8 4.8 L5 4.8 L3.5 6.5 Z" fill="#fbe48a"/></svg>
<div class="hl" style="left:37px;top:399px;width:694px"></div>
<div class="t" style="left:38px;top:414px">Brennweite</div>
<div class="t blue" style="left:194px;top:414px;">28 mm</div>
<div class="t" style="left:452px;width:56px;text-align:center;top:414px">920A</div>
<div class="t" style="left:515px;top:414px">FocalLength</div>
<div class="t" style="left:633px;top:414px;letter-spacing:-0.4px">RATIONAL</div>

<div class="hl" style="left:37px;top:420px;width:694px"></div>
<div class="t" style="left:38px;top:435px">Benutzerkommentar</div>
<div class="t" style="left:452px;width:56px;text-align:center;top:435px">9286</div>
<div class="t" style="left:515px;top:435px">UserComment</div>
<div class="t" style="left:633px;top:435px;letter-spacing:-0.4px">UNDEFINED(125)</div>
<svg class="a" style="left:19px;top:424px" width="13" height="14" viewBox="0 0 13 14"><rect x="0.5" y="0.5" width="11" height="12.5" fill="#fff" stroke="#b4b4b4"/><path d="M3 3.8 H9 M3 5.8 H9 M3 7.8 H9 M3 9.8 H9" stroke="#a8a8a8" stroke-width="0.9"/></svg>
<div class="hl" style="left:37px;top:441px;width:694px"></div>
<div class="t" style="left:38px;top:456px">DateTimeOriginal 1/100</div>
<div class="t" style="left:38px;top:469px">Sekunden</div>
<div class="t blue" style="left:194px;top:456px;letter-spacing:0.1px;">0"</div>
<div class="t" style="left:452px;width:56px;text-align:center;top:456px">9291</div>
<div class="t" style="left:515px;top:456px">SubSecTimeOriginal</div>
<div class="t" style="left:633px;top:456px;letter-spacing:-0.4px">ASCII(3)</div>
<svg class="a" style="left:19px;top:445px" width="14" height="14" viewBox="0 0 14 14"><circle cx="7" cy="7" r="6.4" fill="#f5e7c8" stroke="#d9a441" stroke-width="1.2"/><circle cx="7" cy="7" r="4.6" fill="#f2f8ff" stroke="#6d98e0" stroke-width="1"/><path d="M7 4 L7 7.5 L9.5 5.5" fill="none" stroke="#445" stroke-width="1.1"/></svg>
<div class="hl" style="left:37px;top:475px;width:694px"></div>
<div class="t" style="left:38px;top:490px">DateTimeDigitized 1/100</div>
<div class="t" style="left:38px;top:503px">Sekunden</div>
<div class="t blue" style="left:194px;top:490px;letter-spacing:0.1px;">0"</div>
<div class="t" style="left:452px;width:56px;text-align:center;top:490px">9292</div>
<div class="t" style="left:515px;top:490px">SubSecTimeDigitized</div>
<div class="t" style="left:633px;top:490px;letter-spacing:-0.4px">ASCII(3)</div>
<svg class="a" style="left:19px;top:479px" width="14" height="14" viewBox="0 0 14 14"><circle cx="7" cy="7" r="6.4" fill="#f5e7c8" stroke="#d9a441" stroke-width="1.2"/><circle cx="7" cy="7" r="4.6" fill="#f2f8ff" stroke="#6d98e0" stroke-width="1"/><path d="M7 4 L7 7.5 L9.5 5.5" fill="none" stroke="#445" stroke-width="1.1"/></svg>
<div class="hl" style="left:37px;top:509px;width:694px"></div>
<div class="t" style="left:38px;top:524px">Farbraum</div>
<div class="t blue" style="left:194px;top:524px;">sRGB</div>
<div class="t" style="left:452px;width:56px;text-align:center;top:524px">A001</div>
<div class="t" style="left:515px;top:524px">ColorSpace</div>
<div class="t" style="left:633px;top:524px;letter-spacing:-0.4px">SHORT</div>
<svg class="a" style="left:19px;top:513px" width="13" height="13" viewBox="0 0 13 13"><path d="M6.5 0.8 L12 3.5 L6.5 6.2 L1 3.5Z" fill="#7fe8f0" stroke="#444" stroke-width="0.6"/><path d="M1 3.5 L6.5 6.2 L6.5 12.3 L1 9.6Z" fill="#f2d21a" stroke="#333" stroke-width="0.7"/><path d="M12 3.5 L6.5 6.2 L6.5 12.3 L12 9.6Z" fill="#f27ad8" stroke="#5a0a6a" stroke-width="0.8"/></svg>
<div class="hl" style="left:37px;top:530px;width:694px"></div>
<div class="t" style="left:38px;top:545px">Bildbreite</div>
<div class="t blue" style="left:194px;top:545px;letter-spacing:0.1px;">3648</div>
<div class="t" style="left:452px;width:56px;text-align:center;top:545px">A002</div>
<div class="t" style="left:515px;top:545px">PixelXDimension</div>
<div class="t" style="left:633px;top:545px;letter-spacing:-0.4px">LONG</div>
<svg class="a" style="left:19px;top:534px" width="14" height="14" viewBox="0 0 14 14"><rect x="1" y="0.5" width="12" height="1.5" fill="#8fb6ea"/></svg>
<div class="hl" style="left:37px;top:551px;width:694px"></div>
</div>
<div class="a" style="left:209px;top:594px;width:759px;height:25px;background:linear-gradient(#f8f7f4,#e6e3dd);border-top:1px solid #c5c0b8"></div>
<svg class="a" style="left:215px;top:601px" width="17" height="17" viewBox="0 0 17 17"><rect x="1.5" y="1.5" width="15" height="15" rx="1.5" fill="#d6d3cb"/><rect x="0.5" y="0.5" width="15" height="15" rx="1.5" fill="#fdfdfb"/><defs><linearGradient id="rx" x1="0" y1="0" x2="0" y2="1"><stop offset="0" stop-color="#e85a38"/><stop offset="1" stop-color="#d23a1a"/></linearGradient></defs><rect x="1" y="1" width="14" height="14" rx="1.5" fill="url(#rx)"/><path d="M4.5 4.5 L11.5 11.5 M11.5 4.5 L4.5 11.5" stroke="#fff" stroke-width="2.3"/></svg>
<div class="t" style="left:241px;top:613px;letter-spacing:-0.3px">Suchen<span style="letter-spacing:0.6px">:</span></div>
<div class="a" style="left:286px;top:600px;width:682px;height:18px;background:#fff;border:1px solid #c2beb6"></div>
</body></html>
